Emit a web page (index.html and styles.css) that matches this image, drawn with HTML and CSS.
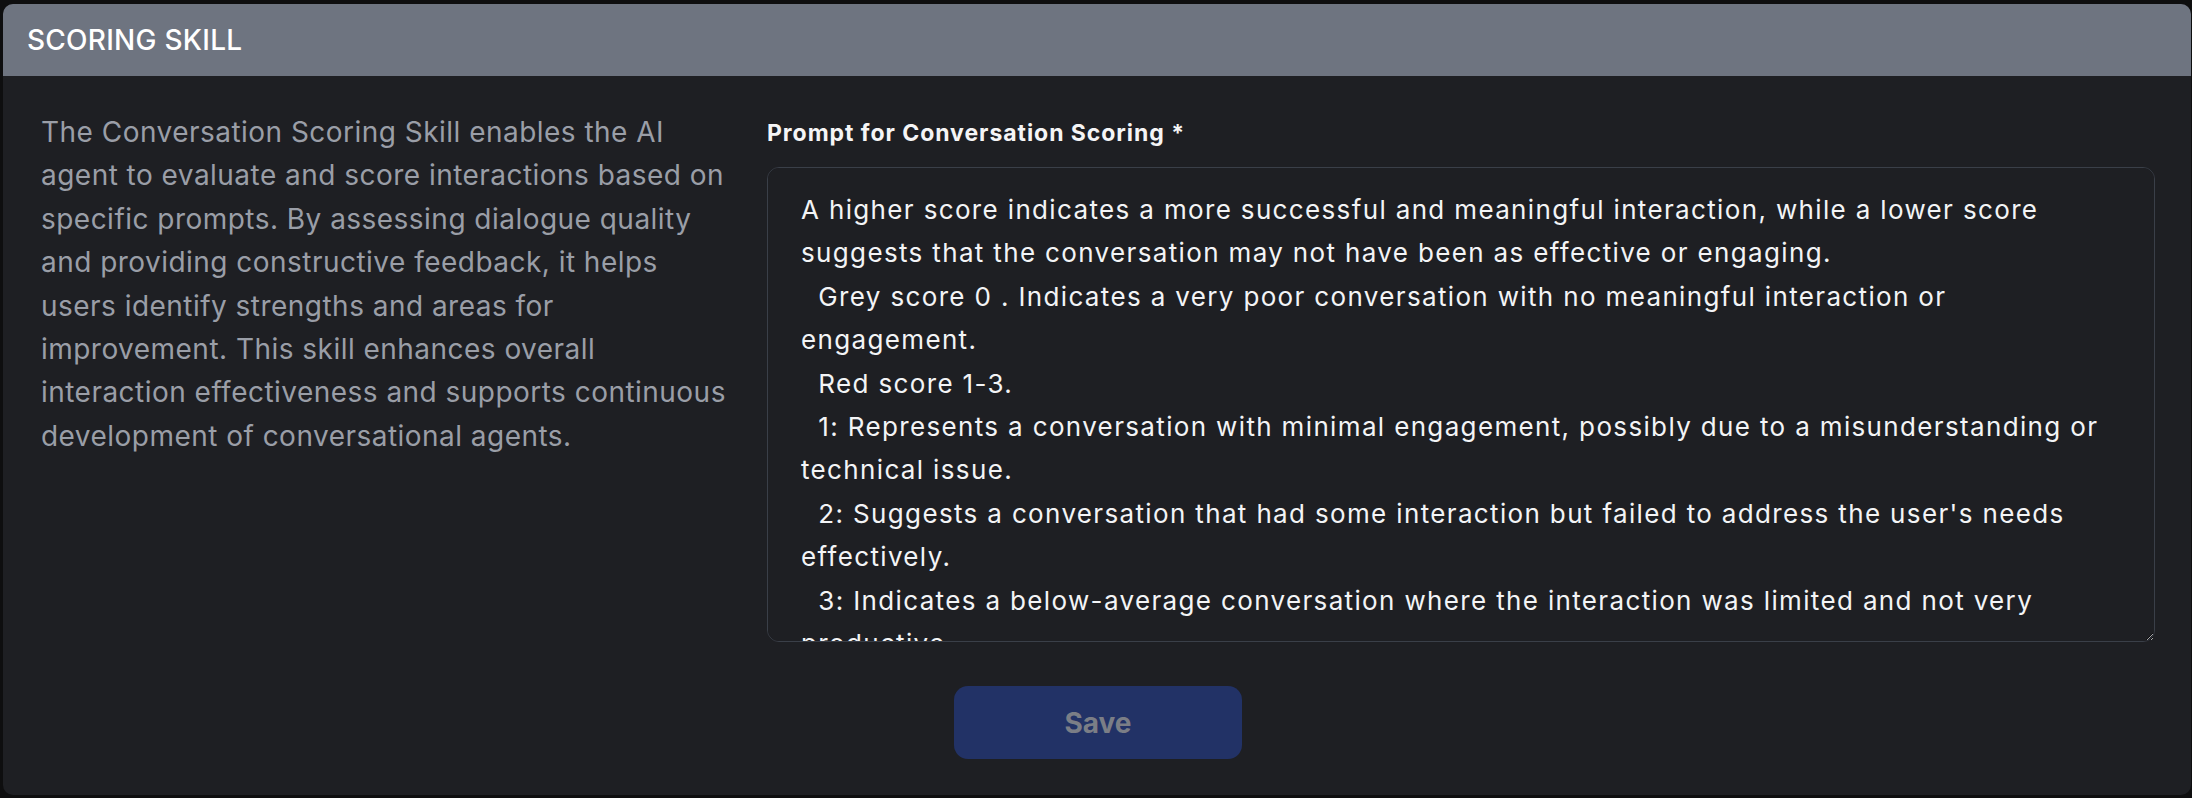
FILE: index.html
```html
<!DOCTYPE html>
<html lang="en">
<head>
<meta charset="utf-8">
<title>Scoring Skill</title>
<link rel="stylesheet" href="styles.css">
</head>
<body>
<section class="card">
  <header class="card-header">
    <h2 class="card-title">SCORING SKILL</h2>
  </header>
  <div class="card-body">
    <div class="columns">
      <p class="description">The Conversation Scoring Skill enables the AI agent to evaluate and score interactions based on specific prompts. By assessing dialogue quality and providing constructive feedback, it helps users identify strengths and areas for improvement. This skill enhances overall interaction effectiveness and supports continuous development of conversational agents.</p>
      <div class="field">
        <label class="field-label" for="prompt">Prompt for Conversation Scoring *</label>
        <textarea id="prompt" class="field-input">A higher score indicates a more successful and meaningful interaction, while a lower score suggests that the conversation may not have been as effective or engaging.
  Grey score 0 . Indicates a very poor conversation with no meaningful interaction or engagement.
  Red score 1-3.
  1: Represents a conversation with minimal engagement, possibly due to a misunderstanding or technical issue.
  2: Suggests a conversation that had some interaction but failed to address the user's needs effectively.
  3: Indicates a below-average conversation where the interaction was limited and not very productive.
  Yellow score 4-6.
  4: Reflects a conversation that had some positive elements but lacked depth or clarity.
  5: Represents an average conversation with satisfactory interaction but room for improvement.
  6: Indicates a decent conversation that was generally effective but could have been more engaging.
  Green score 7-10.
  7: Suggests a good conversation with clear and effective interaction.
  8: Represents a very good conversation with strong engagement and useful outcomes.
  9: Indicates an excellent conversation that fully met the user's needs.
  10: Reflects an outstanding conversation with exceptional engagement and value.</textarea>
      </div>
    </div>
    <div class="actions">
      <button class="btn-save" type="button" disabled>Save</button>
    </div>
  </div>
</section>
</body>
</html>
```

FILE: styles.css
```css
html, body {
  margin: 0;
  background: #0e0e0f;
}

body {
  padding: 4px 1px 3px 3px;
  font-family: Inter, "Noto Sans", "Liberation Sans", sans-serif;
}

.card {
  background: #1e1f23;
  border-radius: 10px;
  overflow: hidden;
}

.card-header {
  background: #6e7480;
  height: 72px;
  display: flex;
  align-items: center;
  padding: 0 24px;
}

.card-title {
  margin: 0;
  color: #ffffff;
  font-size: 28px;
  font-weight: 500;
  letter-spacing: 0.25px;
  line-height: 1;
}

.card-body {
  padding: 35px 36px 36px 38px;
}

.columns {
  display: grid;
  grid-template-columns: 696px 1fr;
  column-gap: 30px;
}

.description {
  margin: 0;
  color: #9a9ea7;
  font-size: 28px;
  letter-spacing: 0.47px;
  line-height: 43.4px;
}

.field {
  display: flex;
  flex-direction: column;
}

.field-label {
  display: block;
  margin: 6px 0 18px;
  color: #f5f5f6;
  font-size: 23px;
  font-weight: 700;
  letter-spacing: 0.95px;
  line-height: 32px;
}

.field-input {
  box-sizing: border-box;
  width: 100%;
  height: 475px;
  margin: 0;
  padding: 20px 33px;
  background: #1e1f23;
  color: #f3f4f6;
  border: 1px solid #3a3f48;
  border-radius: 12px;
  font-family: Inter, "Noto Sans", "Liberation Sans", sans-serif;
  font-size: 26px;
  letter-spacing: 1.35px;
  line-height: 43.4px;
  resize: vertical;
  outline: none;
  color-scheme: dark;
  scrollbar-width: none;
}

.actions {
  display: flex;
  justify-content: center;
  margin-top: 44px;
}

.btn-save {
  width: 288px;
  height: 73px;
  border: none;
  border-radius: 14px;
  background: #223266;
  color: #7b7e86;
  font-family: Inter, "Noto Sans", "Liberation Sans", sans-serif;
  font-size: 28px;
  font-weight: 700;
  cursor: not-allowed;
}
```
